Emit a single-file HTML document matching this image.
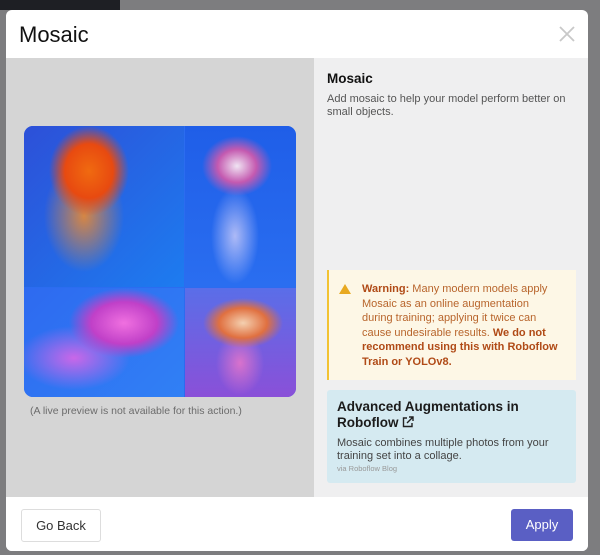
<!DOCTYPE html>
<html><head><style>
*{margin:0;padding:0;box-sizing:border-box}
body{width:600px;height:555px;overflow:hidden;background:#7d7d7f;font-family:"Liberation Sans",Arial,sans-serif;position:relative}
.bgdark{position:absolute;left:0;top:0;width:120px;height:10px;background:#1e1f24}
.modal{position:absolute;left:6px;top:10px;width:582px;height:541px;background:#fff;border-radius:6px;overflow:hidden}
.hdr{height:48px;position:relative}
.hdr h1{position:absolute;left:13px;top:12px;font-weight:400;font-size:22px;color:#111}
.x{position:absolute;right:13px;top:16px}
.left{position:absolute;left:0;top:48px;width:308px;height:439px;background:#d5d5d5}
.right{position:absolute;left:308px;top:48px;width:274px;height:439px;background:#efeff0}
.img{position:absolute;left:18px;top:68px;width:272px;height:271px;border-radius:9px;overflow:hidden;background:#2b6cf0}
.q{position:absolute}
.cap{position:absolute;left:24px;top:347px;font-size:10.5px;color:#6c6c6c}
.right h2{position:absolute;left:13px;top:13px;font-size:13.5px;color:#111;font-weight:700}
.right p.d{position:absolute;left:13px;top:35px;font-size:11px;line-height:13px;color:#555;width:250px}
.warn{position:absolute;left:13px;top:212px;width:249px;height:110px;background:#fdf7e6;border-left:2px solid #f2c232;padding:12px 16px 0 33px;font-size:11px;line-height:14.5px;color:#b8652c}
.warn b{color:#b04a16}
.tri{position:absolute;left:10px;top:14px;width:0;height:0;border-left:6px solid transparent;border-right:6px solid transparent;border-bottom:10px solid #e8a921}
.adv{position:absolute;left:13px;top:332px;width:249px;height:93px;background:#d5eaf1;border-radius:3px;padding:9px 10px}
.adv h3{font-size:13.5px;line-height:16px;color:#1b1b1b;font-weight:700}
.adv p{font-size:11px;line-height:13px;color:#444;margin-top:6px}
.adv small{font-size:7.5px;color:#999;display:block;margin-top:1px}
.ft{position:absolute;left:0;top:487px;width:582px;height:54px;background:#fff}
.back{position:absolute;left:15px;top:12px;width:80px;height:33px;border:1px solid #ddd;border-radius:3px;font-size:13px;color:#333;text-align:center;line-height:31px}
.apply{position:absolute;left:505px;top:12px;width:62px;height:32px;background:#5a5fc4;border-radius:3px;color:#fff;font-size:13px;text-align:center;line-height:32px}
</style></head><body>
<div class="bgdark"></div>
<div class="modal">
 <div class="hdr"><h1>Mosaic</h1><svg class="x" width="16" height="16" viewBox="0 0 16 16"><path d="M1 1L15 15M15 1L1 15" stroke="#c8c8c8" stroke-width="1.8"/></svg></div>
 <div class="left">
  <div class="img">
   <div class="q" style="left:0;top:0;width:160px;height:161px;background:radial-gradient(ellipse 40px 45px at 65px 45px,#f06a10,#e84a10 60%,transparent 100%),radial-gradient(ellipse 50px 70px at 60px 90px,rgba(245,140,40,.85),transparent 80%),linear-gradient(135deg,#2d50d8,#1d7cf0)"></div>
   <div class="q" style="left:161px;top:0;width:111px;height:161px;background:radial-gradient(ellipse 35px 30px at 52px 40px,#f0e4f3,#c45ab0 55%,transparent 100%),radial-gradient(ellipse 30px 60px at 50px 110px,rgba(230,220,250,.7),transparent 80%),linear-gradient(180deg,#1f5ee8,#2a6ef0)"></div>
   <div class="q" style="left:0;top:162px;width:160px;height:109px;background:radial-gradient(ellipse 55px 35px at 100px 35px,#f070e0,#c040c8 60%,transparent 100%),radial-gradient(ellipse 70px 40px at 50px 70px,rgba(240,100,230,.8),transparent 80%),linear-gradient(135deg,#2e6af0,#3080f5)"></div>
   <div class="q" style="left:161px;top:162px;width:111px;height:109px;background:radial-gradient(ellipse 40px 25px at 58px 35px,#f4d0b0,#e07040 60%,transparent 100%),radial-gradient(ellipse 30px 40px at 55px 75px,rgba(240,120,200,.8),transparent 80%),linear-gradient(180deg,#5a6ee8,#8a50d8)"></div>
  </div>
  <div class="cap">(A live preview is not available for this action.)</div>
 </div>
 <div class="right">
  <h2>Mosaic</h2>
  <p class="d">Add mosaic to help your model perform better on small objects.</p>
  <div class="warn"><div class="tri"></div><b>Warning:</b> Many modern models apply Mosaic as an online augmentation during training; applying it twice can cause undesirable results. <b>We do not recommend using this with Roboflow Train or YOLOv8.</b></div>
  <div class="adv"><h3>Advanced Augmentations in Roboflow <svg width="12" height="12" viewBox="0 0 12 12" style="vertical-align:-1px"><path d="M5 2H1.5v8.5H10V7M7 1h4v4M11 1L5 7" fill="none" stroke="#222" stroke-width="1.4"/></svg></h3><p>Mosaic combines multiple photos from your training set into a collage.</p><small>via Roboflow Blog</small></div>
 </div>
 <div class="ft"><div class="back">Go Back</div><div class="apply">Apply</div></div>
</div>
</body></html>
